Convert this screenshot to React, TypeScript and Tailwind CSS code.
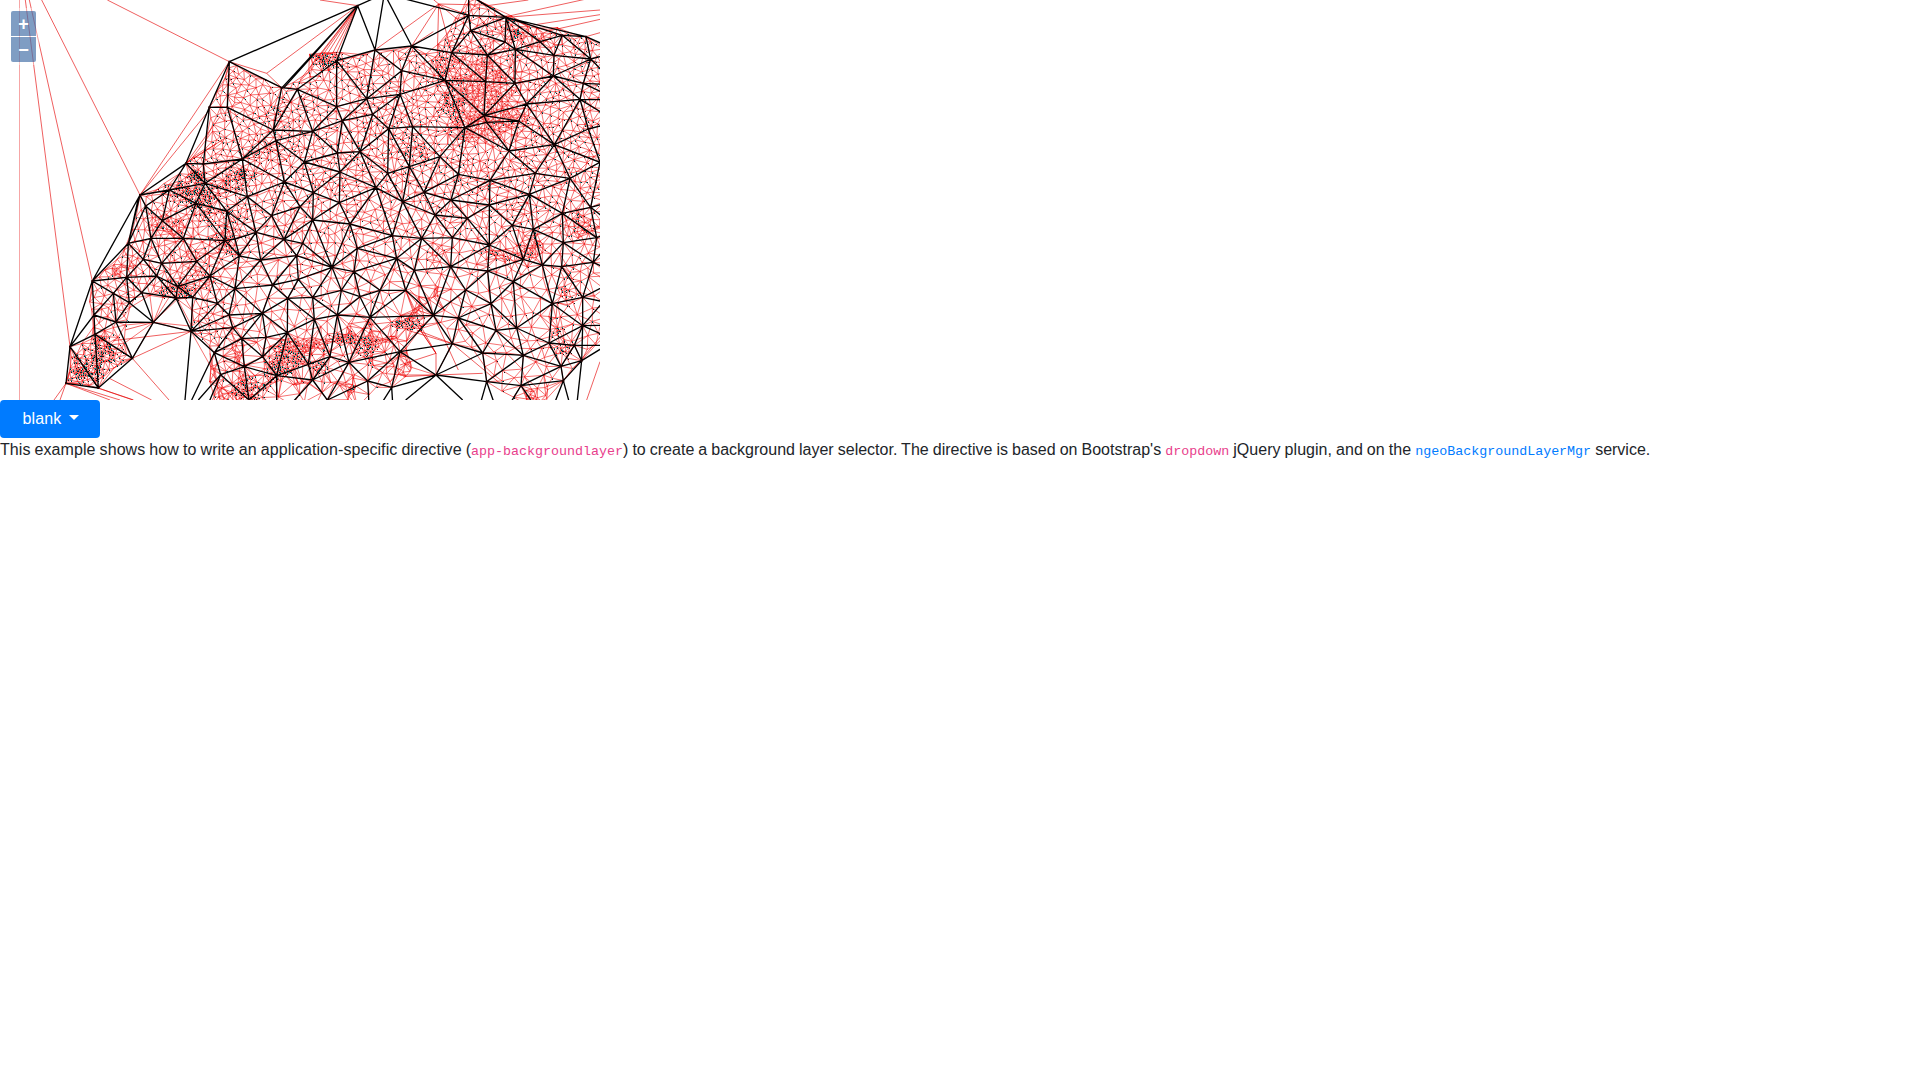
import React from "react";

type Pt = [number, number];
type Edge = [number, number];

// Map geometry is expressed in thirds of a pixel: 1800 x 1200 for a 600 x 400 map.
const STATIONS: Pt[] = [
  [420, 585], [508, 570], [558, 490],
  [688, 185], [845, 263], [892, 268], [1073, 17], [1125, 150], [1010, 182], [628, 322], [682, 322],
  [820, 390], [828, 422], [938, 394], [1010, 320], [1027, 362], [1100, 296], [1118, 343], [1200, 283],
  [1080, 455], [1012, 459], [913, 486], [1020, 516], [1166, 386], [727, 477], [610, 492], [615, 550],
  [853, 546], [940, 578], [1128, 563], [1163, 520], [742, 590],
  [1205, 212], [1235, 138], [1406, 46], [1412, 92], [1518, 52], [1355, 158], [1462, 165], [1515, 126],
  [1546, 148], [1620, 125], [1687, 106], [1758, 110], [1662, 166], [1660, 228], [1772, 177], [1750, 250],
  [1545, 250], [1335, 241], [1457, 245], [1580, 312], [1740, 298], [1452, 347], [1460, 367], [1395, 383],
  [1556, 363], [1238, 380], [1228, 500], [1320, 470], [1527, 453], [1663, 434], [1765, 387], [1800, 487],
  [1375, 523], [1272, 577], [1470, 541], [1606, 520], [1710, 535], [1588, 583], [1353, 600],
  [437, 618], [588, 610], [487, 662], [453, 715], [550, 715], [385, 730], [430, 778], [485, 790],
  [590, 784], [277, 843], [380, 832], [470, 828], [533, 860], [340, 880], [425, 878], [528, 894],
  [578, 892], [282, 945], [388, 908], [348, 966], [460, 967], [573, 994], [285, 1003], [210, 1040],
  [397, 1075], [198, 1150], [295, 1164],
  [680, 633], [675, 722], [705, 717], [718, 768], [630, 828], [705, 866], [768, 697], [815, 647],
  [900, 620], [938, 660], [852, 718], [782, 780], [908, 730], [890, 767], [818, 855], [895, 838],
  [863, 895], [938, 892], [996, 802], [1050, 672], [1072, 745], [1018, 608], [1062, 815], [1024, 871],
  [1080, 890], [1140, 871], [1012, 945], [1110, 952], [943, 958], [787, 940], [687, 945], [652, 910],
  [698, 983], [798, 1012], [725, 1016], [788, 1070], [643, 1058], [662, 1124], [733, 1100], [830, 1127],
  [862, 998], [925, 1093], [990, 1070], [1047, 1087], [938, 1140], [982, 1200], [1103, 1143],
  [1175, 1162], [1200, 1055], [747, 1200], [1177, 707], [1190, 775],
  [1208, 605], [1305, 645], [1265, 715], [1357, 713], [1468, 615], [1402, 655], [1537, 676],
  [1600, 688], [1468, 735], [1352, 800], [1243, 811], [1570, 778], [1627, 795], [1687, 640], [1772, 622],
  [1690, 728], [1790, 713], [1780, 787], [1685, 800], [1463, 813], [1540, 845], [1397, 870], [1217, 871],
  [1473, 911], [1300, 946], [1375, 954], [1657, 911], [1748, 892], [1748, 977], [1488, 991], [1550, 984],
  [1647, 1029], [1723, 1036], [1357, 1031], [1448, 1059], [1570, 1066], [1745, 1082], [1683, 1099],
  [1308, 1125], [1460, 1145], [1563, 1157], [1690, 1142],
  [1153, -19], [1406, -15], [1860, 155], [1850, 255], [1855, 300], [1850, 365], [1850, 600], [1860, 690],
  [1870, 830], [540, 1360], [600, 1270], [830, 1260], [1110, 1265],
  [1180, 1240], [1500, 1260], [1640, 1270], [1725, 1270], [1430, 1250],
];

const OUTLINE_EDGES: [number, number, number, number][] = [
  [688, 185, 1073, 17], [1073, 17, 846, 263], [1073, 17, 852, 263], [1073, 17, 1010, 182], [688, 185, 845, 263],
  [688, 185, 628, 322], [628, 322, 558, 490], [628, 322, 610, 492], [420, 585, 277, 843], [420, 585, 385, 730],
  [415, 595, 385, 730], [437, 618, 385, 730], [277, 843, 210, 1040], [385, 730, 277, 843],
  [282, 945, 210, 1040], [277, 843, 282, 945], [198, 1150, 295, 1164], [210, 1040, 295, 1164],
  [285, 1003, 397, 1075], [348, 966, 397, 1075], [460, 967, 397, 1075], [285, 1003, 295, 1164],
  [295, 1164, 397, 1075], [573, 994, 555, 1200], [460, 967, 573, 994], [573, 994, 643, 1058],
  [643, 1058, 575, 1200], [662, 1124, 595, 1200], [1518, 52, 1758, 110], [1518, 52, 1687, 106],
  [1153, -19, 1406, 46], [1406, 46, 1235, 138], [1153, -19, 1235, 138], [1153, -19, 1125, 150],
  [1073, 17, 1153, -19], [1308, 1125, 1388, 1200], [1308, 1125, 1217, 1200], [1308, 1125, 1460, 1145],
  [1518, 52, 1420, -8], [1758, 110, 1810, 134], [1723, 1036, 1810, 1036], [1745, 1082, 1732, 1200],
  [1745, 1082, 1810, 1042], [1748, 977, 1810, 976], [1748, 977, 1810, 905], [1748, 892, 1810, 905],
  [1748, 977, 1810, 1005], [1110, 952, 1300, 946], [1110, 952, 1217, 871], [1140, 871, 1217, 871],
  [1300, 946, 1200, 1055],
];

const LONG_RED: [number, number, number, number][] = [
  [76, 0, 210, 1040], [88, 0, 277, 843], [125, 0, 420, 585], [322, 0, 688, 185],
  [420, 585, 688, 185], [420, 585, 628, 330], [558, 490, 682, 410], [558, 490, 650, 430],
  [558, 490, 660, 350], [198, 1150, 162, 1200], [198, 1150, 180, 1200], [198, 1150, 330, 1200],
  [198, 1150, 360, 1200], [295, 1164, 400, 1200], [296, 1165, 400, 1200], [330, 1136, 455, 1200],
  [397, 1075, 507, 1200], [340, 1022, 573, 994], [397, 1075, 573, 994], [375, 990, 460, 967],
  [960, 0, 1073, 17], [1073, 17, 800, 220], [1073, 17, 900, 240], [1073, 17, 950, 180],
  [1073, 17, 965, 170], [1073, 17, 980, 165], [1073, 17, 995, 165], [1073, 17, 1005, 170],
  [800, 220, 845, 263], [800, 220, 688, 185], [1316, 12, 1235, 138], [1316, 12, 1125, 150],
  [1316, 12, 1406, 46], [1316, 12, 1355, 158], [1316, 12, 1312, 160], [1316, 12, 1455, 15],
  [1316, 12, 1290, -10], [1316, 12, 1375, 60], [1455, 18, 1585, 0], [1518, 50, 1800, -12],
  [1518, 52, 1800, 30], [1600, 75, 1800, 44], [1650, 92, 1800, 58],
  [1758, 110, 1800, 98], [1235, 138, 1300, 95], [1800, 1085, 1760, 1200],
  [1810, 1000, 1690, 1142], [1300, 946, 1375, 1110], [1357, 1031, 1220, 990], [1357, 1031, 1308, 1125],
  [1308, 1125, 1448, 1120], [1308, 1125, 1210, 1130], [1308, 1060, 1308, 1125], [1308, 1060, 1200, 1095],
  [1308, 1060, 1250, 975], [1308, 1060, 1260, 975], [1308, 1060, 1255, 980], [1308, 1125, 1200, 1125],
  [1357, 1031, 1250, 990], [1300, 946, 1230, 870], [1300, 946, 1250, 930], [1217, 871, 1245, 950],
  [1217, 871, 1260, 920], [1357, 1031, 1500, 1150], [630, 1060, 660, 1200], [635, 1120, 700, 1200],
];

const rng = (seed: number) => () => {
  seed = (seed + 0x6d2b79f5) | 0;
  let t = Math.imul(seed ^ (seed >>> 15), 1 | seed);
  t = (t + Math.imul(t ^ (t >>> 7), 61 | t)) ^ t;
  return ((t ^ (t >>> 14)) >>> 0) / 4294967296;
};

// Delaunay triangulation by a sweep over x; returns unique edges.
function triangulate(pts: Pt[]): Edge[] {
  const n = pts.length;
  const p: Pt[] = [...pts, [-20000, -9000], [1000, 30000], [22000, -9000]];
  const order = pts.map((_, i) => i).sort((a, b) => pts[a][0] - pts[b][0]);
  type T = { a: number; b: number; c: number; x: number; y: number; r: number };
  const make = (a: number, b: number, c: number): T | null => {
    const [ax, ay] = p[a];
    const bx = p[b][0] - ax, by = p[b][1] - ay, cx = p[c][0] - ax, cy = p[c][1] - ay;
    const d = 2 * (bx * cy - by * cx);
    if (Math.abs(d) < 1e-9) return null;
    const ux = (cy * (bx * bx + by * by) - by * (cx * cx + cy * cy)) / d;
    const uy = (bx * (cx * cx + cy * cy) - cx * (bx * bx + by * by)) / d;
    return { a, b, c, x: ax + ux, y: ay + uy, r: ux * ux + uy * uy };
  };
  let open: T[] = [make(n, n + 1, n + 2)!];
  const closed: T[] = [];
  for (const i of order) {
    const [x, y] = p[i];
    const keep: T[] = [];
    const rim = new Map<string, Edge>();
    const flip = (a: number, b: number) => {
      const k = a < b ? a + "," + b : b + "," + a;
      if (rim.has(k)) rim.delete(k);
      else rim.set(k, [a, b]);
    };
    for (const t of open) {
      const dx = x - t.x;
      if (dx > 0 && dx * dx > t.r) {
        closed.push(t);
        continue;
      }
      const dy = y - t.y;
      if (dx * dx + dy * dy - t.r > 1e-7) keep.push(t);
      else {
        flip(t.a, t.b);
        flip(t.b, t.c);
        flip(t.c, t.a);
      }
    }
    rim.forEach(([a, b]) => {
      const t = make(a, b, i);
      if (t) keep.push(t);
    });
    open = keep;
  }
  const out = new Map<number, Edge>();
  for (const t of closed.concat(open))
    for (const [a, b] of [[t.a, t.b], [t.b, t.c], [t.c, t.a]])
      if (a < n && b < n) out.set(Math.min(a, b) * 100000 + Math.max(a, b), [a, b]);
  return [...out.values()];
}

const LAND: Pt[] = [
  [688, 185], [845, 263], [900, 238], [960, 175], [1010, 165], [1125, 150], [1235, 138], [1310, 150],
  [1370, 60], [1410, 15], [1470, 15], [1518, 52], [1600, 85], [1758, 110], [1830, 150], [1830, 1000],
  [1745, 1075], [1690, 1142], [1640, 1220], [1570, 1220], [1470, 1150], [1440, 1060], [1357, 1031],
  [1300, 946], [1217, 871], [1110, 955], [1170, 1100], [1090, 1230], [620, 1230], [640, 1050], [573, 994],
  [575, 900], [520, 890], [480, 880], [395, 915], [380, 990], [350, 966], [397, 1075], [295, 1164],
  [203, 1145], [215, 1060], [282, 990], [265, 930], [277, 843], [335, 790], [385, 730], [420, 585],
  [508, 570], [558, 490], [610, 430], [640, 300],
];

const inside = (x: number, y: number) => {
  let c = false;
  for (let i = 0, j = LAND.length - 1; i < LAND.length; j = i++) {
    const [xi, yi] = LAND[i];
    const [xj, yj] = LAND[j];
    if (yi > y !== yj > y && x < ((xj - xi) * (y - yi)) / (yj - yi) + xi) c = !c;
  }
  return c;
};

// x, y, spread x, spread y, point count, share of points drawn as dots
const CLUSTERS: number[][] = [
  [1460, 290, 55, 60, 300, 0.03], [1440, 380, 40, 25, 140, 0.1], [1420, 210, 60, 35, 120, 0.1],
  [1530, 350, 40, 20, 80, 0.1], [1355, 310, 20, 45, 100, 1], [980, 180, 22, 11, 80, 1],
  [585, 525, 12, 9, 90, 1], [725, 520, 9, 7, 55, 1], [700, 540, 30, 20, 60, 1],
  [570, 575, 38, 20, 120, 1], [600, 600, 30, 25, 60, 1], [500, 680, 40, 22, 80, 0.15],
  [525, 870, 28, 12, 90, 1], [245, 1105, 28, 22, 120, 1], [290, 1080, 22, 30, 90, 1],
  [325, 1050, 30, 25, 50, 1], [300, 1018, 10, 5, 60, 0.1], [345, 815, 12, 10, 25, 0.05],
  [390, 790, 15, 20, 20, 0.05], [680, 720, 18, 35, 60, 0.6], [600, 800, 35, 50, 70, 0.3],
  [740, 1170, 28, 28, 90, 0.9], [865, 1065, 28, 20, 130, 0.7], [825, 1100, 20, 18, 60, 0.9],
  [920, 1035, 35, 12, 120, 0.05], [1030, 1018, 25, 8, 50, 0.8], [1095, 1040, 18, 25, 60, 1],
  [950, 1100, 16, 12, 30, 1], [1215, 970, 25, 10, 60, 1], [1140, 1022, 28, 9, 45, 0.05],
  [1310, 760, 25, 20, 20, 0.3], [1515, 765, 35, 18, 50, 0.5], [1590, 745, 22, 20, 55, 0.3],
  [1740, 680, 35, 25, 65, 0.5], [1690, 1050, 22, 14, 30, 0.9], [1605, 1185, 22, 18, 35, 0.05],
  [1230, 440, 30, 50, 65, 1], [1545, 90, 10, 16, 35, 1], [1440, 60, 40, 30, 35, 0.6],
  [1330, 190, 18, 25, 40, 0.9], [810, 450, 50, 20, 45, 1], [1700, 850, 15, 45, 30, 0.9],
  [1670, 980, 15, 25, 20, 0.9], [680, 640, 50, 45, 60, 0.9], [830, 340, 20, 25, 25, 1],
  [1470, 550, 120, 40, 40, 0.8], [1580, 110, 60, 22, 70, 0.1], [710, 1070, 14, 50, 30, 0.05],
  [1190, 1100, 22, 30, 25, 0.03], [1220, 1090, 10, 25, 15, 0.03],
];

// Narrow chains of points along valleys and shores
const STRANDS: [number, Pt[]][] = [
  [45, [[1310, 858], [1312, 880], [1270, 915], [1240, 935], [1225, 960]]],
  [40, [[1050, 965], [1048, 1000], [1080, 1020], [1150, 1022], [1190, 1010]]],
  [20, [[635, 1080], [640, 1130], [665, 1180], [680, 1215]]],
  [28, [[700, 1010], [705, 1070], [725, 1140], [745, 1190]]],
  [34, [[880, 1150], [1000, 1145], [1060, 1160]]],
  [24, [[1060, 1110], [1058, 1160], [1045, 1200]]],
  [36, [[690, 1180], [800, 1160], [860, 1130], [910, 1070]]],
  [28, [[1110, 955], [1110, 1000], [1112, 1100]]],
];

const LAYERS = (() => {
  const rand = rng(48131);
  const gauss = () => (rand() + rand() + rand() + rand() - 2) * 1.73;
  const pts: Pt[] = [];
  const dots: Pt[] = [];
  const cells = new Map<number, Pt[]>();
  const place = (x: number, y: number, gap: number, dot: number) => {
    const cx = Math.floor(x / 40), cy = Math.floor(y / 40);
    for (let i = -1; i <= 1; i++)
      for (let j = -1; j <= 1; j++)
        for (const q of cells.get((cx + i) * 1000 + cy + j) || [])
          if ((q[0] - x) ** 2 + (q[1] - y) ** 2 < gap * gap) return;
    const pt: Pt = [x, y];
    pts.push(pt);
    const key = cx * 1000 + cy;
    if (!cells.has(key)) cells.set(key, []);
    cells.get(key)!.push(pt);
    if (rand() < dot) dots.push(pt);
  };
  STATIONS.forEach(([x, y]) => place(x, y, 0.5, 0));
  for (const [x, y, sx, sy, n, d] of CLUSTERS)
    for (let i = 0; i < n; i++) {
      const px = x + gauss() * sx, py = y + gauss() * sy;
      if (x > 420 || inside(px, py)) place(px, py, 4, d);
    }
  for (const [n, line] of STRANDS)
    for (let i = 0; i < n; i++) {
      const t = rand() * (line.length - 1);
      const k = Math.floor(t), f = t - k;
      const [a, b] = [line[k], line[k + 1]];
      place(a[0] + (b[0] - a[0]) * f + gauss() * 4, a[1] + (b[1] - a[1]) * f + gauss() * 4, 3, 0.05);
    }
  for (let i = 0; i < 26000; i++) {
    const x = 200 + rand() * 1640, y = rand() * 1230;
    if (!inside(x, y)) continue;
    const base = y < 560 ? 14 : y < 700 ? 17 : y < 830 ? 22 : 29;
    const west = x < 680 && y > 500 ? 15 : base;
    place(x, y, Math.min(base, west) * (0.8 + rand() * 0.8), y < 620 ? 0.7 : 0.4);
  }
  let red = "";
  for (const [a, b] of triangulate(pts)) {
    const [x1, y1] = pts[a], [x2, y2] = pts[b];
    const l = Math.hypot(x1 - x2, y1 - y2);
    const fan = x1 > 440 && x1 < 660 && y1 > 850 && y1 < 1000;
    if (l < 78 || (fan && l < 130)) red += `M${x1.toFixed(1)} ${y1.toFixed(1)}L${x2.toFixed(1)} ${y2.toFixed(1)}`;
  }
  let far = "";
  for (const [a, b, c, d] of LONG_RED) far += `M${a} ${b}L${c} ${d}`;
  let black = "";
  for (const [a, b] of triangulate(STATIONS)) {
    const [x1, y1] = STATIONS[a], [x2, y2] = STATIONS[b];
    if (Math.hypot(x1 - x2, y1 - y2) < 168) black += `M${x1} ${y1}L${x2} ${y2}`;
  }
  for (const [a, b, c, d] of OUTLINE_EDGES) black += `M${a} ${b}L${c} ${d}`;
  const cell = ([x, y]: Pt, dx = 0, dy = 0) =>
    `M${Math.round(x / 3 + dx) * 3} ${Math.round(y / 3 + dy) * 3}h3v3h-3z`;
  return {
    red,
    far,
    black,
    joints: pts.filter((_, i) => i % 6 === 0).map((q) => cell(q, -0.5, -0.5)).join(""),
    teal: dots.filter((_, i) => i % 4 < 3).map((q) => cell(q)).join(""),
    dark: dots.map((q, i) => cell(q, i % 2, i % 3 ? 1 - (i % 2) : 1)).join(""),
    nodes: pts.slice(0, STATIONS.length).map(([x, y]) => `M${x - 3} ${y - 3}h6v6h-6z`).join(""),
  };
})();

function MeshMap() {
  return (
    <svg viewBox="0 0 1800 1200" className="block h-[400px] w-[600px]" fill="none">
      <path d="M58.5 0V1200" stroke="#e60000" strokeOpacity={0.35} strokeWidth={3} />
      <path d={LAYERS.far} stroke="#e60000" strokeOpacity={0.7} strokeWidth={2.7} />
      <path d={LAYERS.red} stroke="#ee0000" strokeOpacity={0.64} strokeWidth={2.6} />
      <path d={LAYERS.joints} fill="#ee1010" fillOpacity={0.7} shapeRendering="crispEdges" />
      <path d={LAYERS.teal} fill="#0f9494" shapeRendering="crispEdges" />
      <path d={LAYERS.dark} fill="#14181a" shapeRendering="crispEdges" />
      <path d={LAYERS.black} stroke="#000" strokeWidth={4} />
      <path d={LAYERS.nodes} fill="#200" />
    </svg>
  );
}

function ZoomButton({ label, className }: { label: string; className: string }) {
  return (
    <button
      className={`flex h-[25px] w-[25px] items-center justify-center bg-[#003c88]/50 font-bold text-[18px] leading-none text-white ${className}`}
    >
      {label}
    </button>
  );
}

function Code({ children, className }: { children: string; className: string }) {
  return (
    <code className={`font-['Liberation_Mono',monospace] text-[13.333px] ${className}`}>
      {children}
    </code>
  );
}

export default function App() {
  return (
    <div className="font-['Liberation_Sans',Arial,sans-serif] text-base leading-6 text-[#212529]">
      <div className="relative h-[400px] w-[600px] overflow-hidden">
        <MeshMap />
        <div className="absolute top-2 left-2 flex flex-col gap-px rounded bg-white/40 p-[3px]">
          <ZoomButton label="+" className="rounded-t-[2px]" />
          <ZoomButton label="−" className="rounded-b-[2px]" />
        </div>
      </div>
      <button className="flex h-[38px] w-[100px] items-center justify-center rounded bg-[#007bff] pl-px tracking-[0.15px] text-white">
        blank
        <span className="mb-[3px] ml-[7px] border-x-[5px] border-t-[5px] border-x-transparent border-t-white" />
      </button>
      <p className="[word-spacing:-0.45px]">
        <span className="tracking-[0.07px]">
          This example shows how to write an application-specific directive (
        </span>
        <Code className="text-[#e83e8c]">app-backgroundlayer</Code>
        <span className="tracking-[0.012px]">
          ) to create a background layer selector. The directive is based on Bootstrap's{" "}
        </span>
        <Code className="text-[#e83e8c]">dropdown</Code>
        <span className="tracking-[0.036px]"> jQuery plugin, and on the </span>
        <a href="#" className="text-[#007bff]">
          <Code className="text-[#007bff]">ngeoBackgroundLayerMgr</Code>
        </a>{" "}
        service.
      </p>
    </div>
  );
}
